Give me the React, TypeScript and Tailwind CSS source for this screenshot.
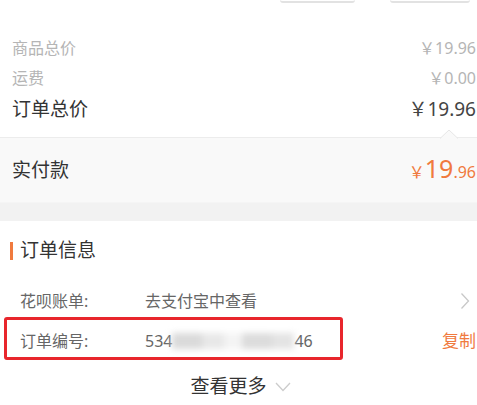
const font = { fontFamily: '"Noto Sans", "Noto Sans CJK SC", sans-serif' }

function PriceRow({ label, value }: { label: string; value: string }) {
  return (
    <div className="flex h-[30px] items-center justify-between pl-[12px] pr-[1px] text-[16px] text-[#b5b5b5]">
      <span>{label}</span>
      <span className="text-[16px]">{value}</span>
    </div>
  )
}

function InfoRow({ label, children }: { label: string; children: React.ReactNode }) {
  return (
    <div className="flex h-full items-center text-[16px] text-[#666]">
      <span className="w-[145px] shrink-0 pl-[20px]">{label}</span>
      {children}
    </div>
  )
}

export default function App() {
  return (
    <div style={font} className="relative h-[405px] w-[477px] overflow-hidden bg-white">
      {/* bottoms of the header buttons */}
      <div className="flex h-[33px] items-start justify-end gap-[35px] pr-[7px]">
        <div className="h-[3px] w-[75px] rounded-b-[12px] border-b-2 border-[#e2e2e2]" />
        <div className="h-[3px] w-[80px] rounded-b-[12px] border-b-2 border-[#e2e2e2]" />
      </div>

      <PriceRow label="商品总价" value="￥19.96" />
      <PriceRow label="运费" value="￥0.00" />
      <div className="flex h-[32px] items-center justify-between pl-[12px] pr-[1px] text-[19px] text-[#333]">
        <span>订单总价</span>
        <span className="text-[19px] text-[#444]">￥19.96</span>
      </div>
      <div className="h-[12px]" />

      <div className="relative flex h-[65px] items-center justify-between border-t border-[#ececec] bg-[#f9f9f9] pl-[12px] pr-[1px]">
        <svg className="absolute -top-[9px] right-[19px]" width="18" height="10" viewBox="0 0 18 10">
          <polygon points="0,9.5 9,1 18,9.5" fill="#f9f9f9" />
          <polyline points="0,9.5 9,1 18,9.5" fill="none" stroke="#e6e6e6" strokeWidth="1" />
        </svg>
        <span className="text-[19px] text-[#333]">实付款</span>
        <span className="flex items-baseline text-[#f07a3e]">
          <span className="text-[16px]">￥</span>
          <span className="text-[25px] leading-none">19</span>
          <span className="text-[16px]">.96</span>
        </span>
      </div>

      <div className="h-[19px] border-t border-[#f5f5f5] bg-[#f2f2f2]" />

      <div className="flex h-[59px] items-center pl-[10px]">
        <span className="mr-[7px] h-[18px] w-[3px] bg-[#f07a3e]" />
        <span className="text-[19px] text-[#333]">订单信息</span>
      </div>

      <div className="h-[41px]">
        <InfoRow label="花呗账单:">
          <span className="flex-1">去支付宝中查看</span>
          <svg width="10" height="18" viewBox="0 0 10 18" className="mr-[7px]">
            <polyline points="1.5,1.5 8.5,9 1.5,16.5" fill="none" stroke="#c8c8c8" strokeWidth="1.3" />
          </svg>
        </InfoRow>
      </div>

      <div className="relative h-[40px]">
        <InfoRow label="订单编号:">
          <span className="flex flex-1 items-center">
            <span>534</span>
            <span className="flex h-[18px] w-[122px] items-center blur-[3px]">
              <span className="h-[16px] w-[30px] bg-[#dadada]" />
              <span className="h-[16px] w-[22px] bg-[#e8e8e8]" />
              <span className="h-[16px] w-[18px] bg-[#f4f4f4]" />
              <span className="h-[16px] w-[30px] bg-[#dcdcdc]" />
              <span className="h-[16px] w-[22px] bg-[#e4e4e4]" />
            </span>
            <span>46</span>
          </span>
          <span className="pr-[1px] text-[17px] text-[#f07a3e]">复制</span>
        </InfoRow>
        <div className="absolute left-[4px] top-[-4px] h-[43px] w-[339px] rounded-[3px] border-[3px] border-[#e8262c]" />
      </div>

      <div className="flex h-[44px] items-center justify-center gap-[8px] pt-[6px] pl-[4px]">
        <span className="text-[19px] text-[#333]">查看更多</span>
        <svg width="16" height="10" viewBox="0 0 16 10" className="mt-[1px]">
          <polyline points="1,1 8,8.5 15,1" fill="none" stroke="#cccccc" strokeWidth="1.3" />
        </svg>
      </div>
    </div>
  )
}
